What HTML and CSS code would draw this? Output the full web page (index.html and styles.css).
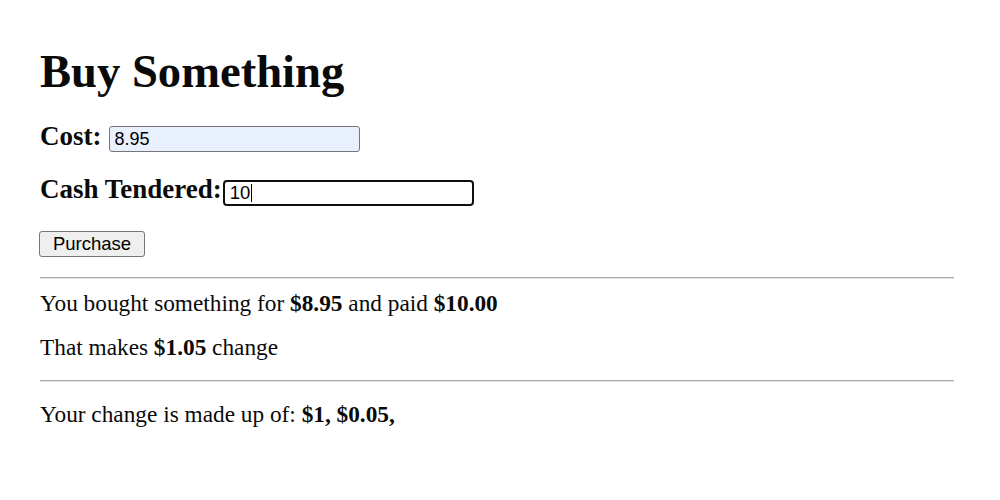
FILE: index.html
```html
<!DOCTYPE html>
<html lang="en">
<head>
<meta charset="utf-8">
<title>Buy Something</title>
<link rel="stylesheet" href="styles.css">
</head>
<body>
<h1 class="title">Buy Something</h1>
<div class="row row-cost">
  <label class="label label-cost" for="cost">Cost:</label>
  <input class="field field-filled" id="cost" type="text" value="8.95">
</div>
<div class="row row-cash">
  <label class="label label-cash">Cash Tendered:</label>
  <span class="field field-focused" role="textbox">10<span class="caret"></span></span>
</div>
<button class="btn" type="button">Purchase</button>
<hr class="rule rule-one">
<p class="line line-one">You bought something for <b>$8.95</b> and paid <b>$10.00</b></p>
<p class="line line-two">That makes <b>$1.05</b> change</p>
<hr class="rule rule-two">
<p class="line line-three">Your change is made up of: <b>$1, $0.05,</b></p>
</body>
</html>
```

FILE: styles.css
```css
html, body {
  background: #ffffff;
}
body {
  margin: 0;
  padding: 0 46px 0 40px;
  font-family: "Liberation Serif", "Times New Roman", serif;
  font-size: 23.3px;
  color: #0a0a0a;
}
.title {
  margin: 45px 0 0;
  font-size: 46.6px;
  line-height: 53px;
  font-weight: bold;
}
.row {
  display: flex;
  align-items: flex-start;
  font-size: 27px;
  line-height: 30px;
  font-weight: bold;
}
.row-cost {
  margin-top: 23px;
}
.row-cash {
  margin-top: 22px;
}
.label-cost {
  margin-right: 7px;
}
.label-cash {
  margin-right: 1px;
}
.field {
  box-sizing: border-box;
  width: 251px;
  height: 26px;
  font-family: "Liberation Sans", Arial, sans-serif;
  font-size: 18px;
  font-weight: normal;
  color: #000;
}
.field-filled {
  margin: 5px 0 0;
  padding: 0 5px;
  border: 1px solid #767676;
  border-radius: 3px;
  background: #e8f0fe;
  outline: none;
}
.field-focused {
  display: flex;
  align-items: center;
  margin-top: 6px;
  padding: 0 5px;
  border: 2px solid #101010;
  border-radius: 4px;
  background: #fff;
  font-size: 18.5px;
  line-height: 22px;
}
.caret {
  display: inline-block;
  width: 1px;
  height: 18px;
  margin-left: 1px;
  background: #000;
}
.btn {
  display: block;
  box-sizing: border-box;
  margin: 25px 0 0 -1px;
  height: 26px;
  width: 106px;
  padding: 0;
  font-family: "Liberation Sans", Arial, sans-serif;
  font-size: 18.5px;
  color: #000;
  background: #efefef;
  border: 1px solid #767676;
  border-radius: 3px;
}
.rule {
  margin: 0;
  height: 0;
  border: 0;
  border-top: 1px solid #a8a8a8;
  border-bottom: 1px solid #e4e4e4;
}
.rule-one {
  margin-top: 20px;
}
.rule-two {
  margin-top: 20px;
}
.line {
  margin: 0;
  line-height: 26px;
}
.line-one {
  margin-top: 11px;
}
.line-two {
  margin-top: 18px;
}
.line-three {
  margin-top: 19px;
}
```
